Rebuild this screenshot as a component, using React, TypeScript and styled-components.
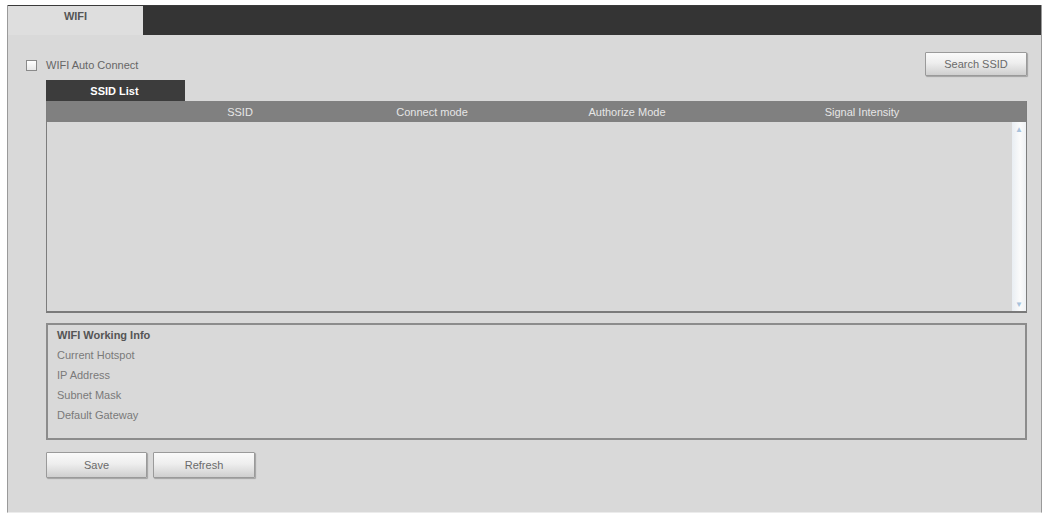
import React from 'react'
import styled, { createGlobalStyle } from 'styled-components'

const GlobalStyle = createGlobalStyle`
body{
  margin: 0;
  background: #ffffff;
  font-family: "Liberation Sans", Arial, sans-serif;
  font-size: 11px;
}
`
const Frame = styled.div`
  margin: 5px 0 0 7px;
  width: 1033px;
  height: 507px;
  background: #d9d9d9;
  border-left: 1px solid #9a9a9a;
  border-right: 1px solid #9a9a9a;
  border-bottom: 1px solid #ececec;
  display: flex;
  flex-direction: column;
`
const TopBar = styled.div`
  height: 29px;
  display: flex;
  border-top: 1px solid #3a3a3a;
  background: #343434;
`
const TopTab = styled.div`
  width: 135px;
  background: #dedede;
  color: #555;
  font-weight: bold;
  font-size: 11px;
  padding-top: 4px;
  text-align: center;
  box-sizing: border-box;
`
const Content = styled.div`
  padding: 17px 14px 0 18px;
  display: flex;
  flex-direction: column;
`
const ActionRow = styled.div`
  height: 24px;
  display: flex;
  align-items: center;
  justify-content: space-between;
`
const CheckLabel = styled.label`
  display: flex;
  align-items: center;
  gap: 9px;
  color: #666;
  margin-top: 2px;
`
const CheckBox = styled.span`
  width: 9px;
  height: 9px;
  border: 1px solid #8a8a8a;
  background: linear-gradient(#ffffff, #e8e8e8);
`
const Button = styled.button<{ w: number; h?: number }>`
  width: ${p => p.w}px;
  height: ${p => p.h ?? 26}px;
  border: 1px solid #9a9a9a;
  border-radius: 1px;
  background: linear-gradient(#fafafa 0%, #eeeeee 45%, #cfcfcf 100%);
  box-shadow: 1px 1px 1px rgba(0,0,0,0.25);
  color: #6a6a6a;
  font-family: "Liberation Sans", Arial, sans-serif;
  font-size: 11px;
  padding: 0;
`
const Section = styled.div`
  margin-left: 20px;
  display: flex;
  flex-direction: column;
`
const SubTab = styled.div`
  margin-top: 4px;
  width: 139px;
  height: 21px;
  background: #3c3c3c;
  color: #ffffff;
  font-weight: bold;
  font-size: 11px;
  display: flex;
  align-items: center;
  justify-content: center;
  padding-right: 2px;
  box-sizing: border-box;
`
const ListBox = styled.div`
  height: 210px;
  border: 1px solid #7d7d7d;
  border-bottom: 2px solid #7a7a7a;
  border-top: none;
  display: flex;
  flex-direction: column;
`
const HeaderRow = styled.div`
  height: 21px;
  background: #808080;
  display: grid;
  grid-template-columns: 98px 190px 194px 196px 274px 1fr;
  align-items: center;
  color: #e6e6e6;
  font-size: 11px;
`
const HeaderCell = styled.div`
  text-align: center;
`
const ListBody = styled.div`
  flex: 1;
  display: flex;
  justify-content: flex-end;
`
const ScrollBar = styled.div`
  width: 14px;
  background: linear-gradient(90deg, #e9eef3, #fbfbfb 60%, #eef1f4);
  display: flex;
  flex-direction: column;
  justify-content: space-between;
  align-items: center;
  color: #a9c3dc;
  font-size: 8px;
  padding: 3px 0 2px;
`
const InfoBox = styled.div`
  margin-top: 10px;
  height: 117px;
  box-sizing: border-box;
  border: 2px solid #8c8c8c;
  padding: 4px 0 0 9px;
  display: flex;
  flex-direction: column;
  gap: 7px;
`
const InfoTitle = styled.div`
  color: #555;
  font-weight: bold;
  font-size: 11px;
  line-height: 13px;
`
const InfoLine = styled.div`
  color: #7a7a7a;
  font-size: 11px;
  line-height: 13px;
`
const ButtonRow = styled.div`
  margin-top: 12px;
  display: flex;
  gap: 6px;
`

const columns = ['', 'SSID', 'Connect mode', 'Authorize Mode', 'Signal Intensity', '']
const infoLines = ['Current Hotspot', 'IP Address', 'Subnet Mask', 'Default Gateway']

const App = () => {
  return (
    <>
      <GlobalStyle />
      <Frame>
        <TopBar>
          <TopTab>WIFI</TopTab>
        </TopBar>
        <Content>
          <ActionRow>
            <CheckLabel><CheckBox />WIFI Auto Connect</CheckLabel>
            <Button w={102} h={24}>Search SSID</Button>
          </ActionRow>
          <Section>
            <SubTab>SSID List</SubTab>
            <ListBox>
              <HeaderRow>
                {columns.map((c, i) => <HeaderCell key={i}>{c}</HeaderCell>)}
              </HeaderRow>
              <ListBody>
                <ScrollBar><span>▲</span><span>▼</span></ScrollBar>
              </ListBody>
            </ListBox>
            <InfoBox>
              <InfoTitle>WIFI Working Info</InfoTitle>
              {infoLines.map(l => <InfoLine key={l}>{l}</InfoLine>)}
            </InfoBox>
            <ButtonRow>
              <Button w={101}>Save</Button>
              <Button w={102}>Refresh</Button>
            </ButtonRow>
          </Section>
        </Content>
      </Frame>
    </>
  )
}

export default App
